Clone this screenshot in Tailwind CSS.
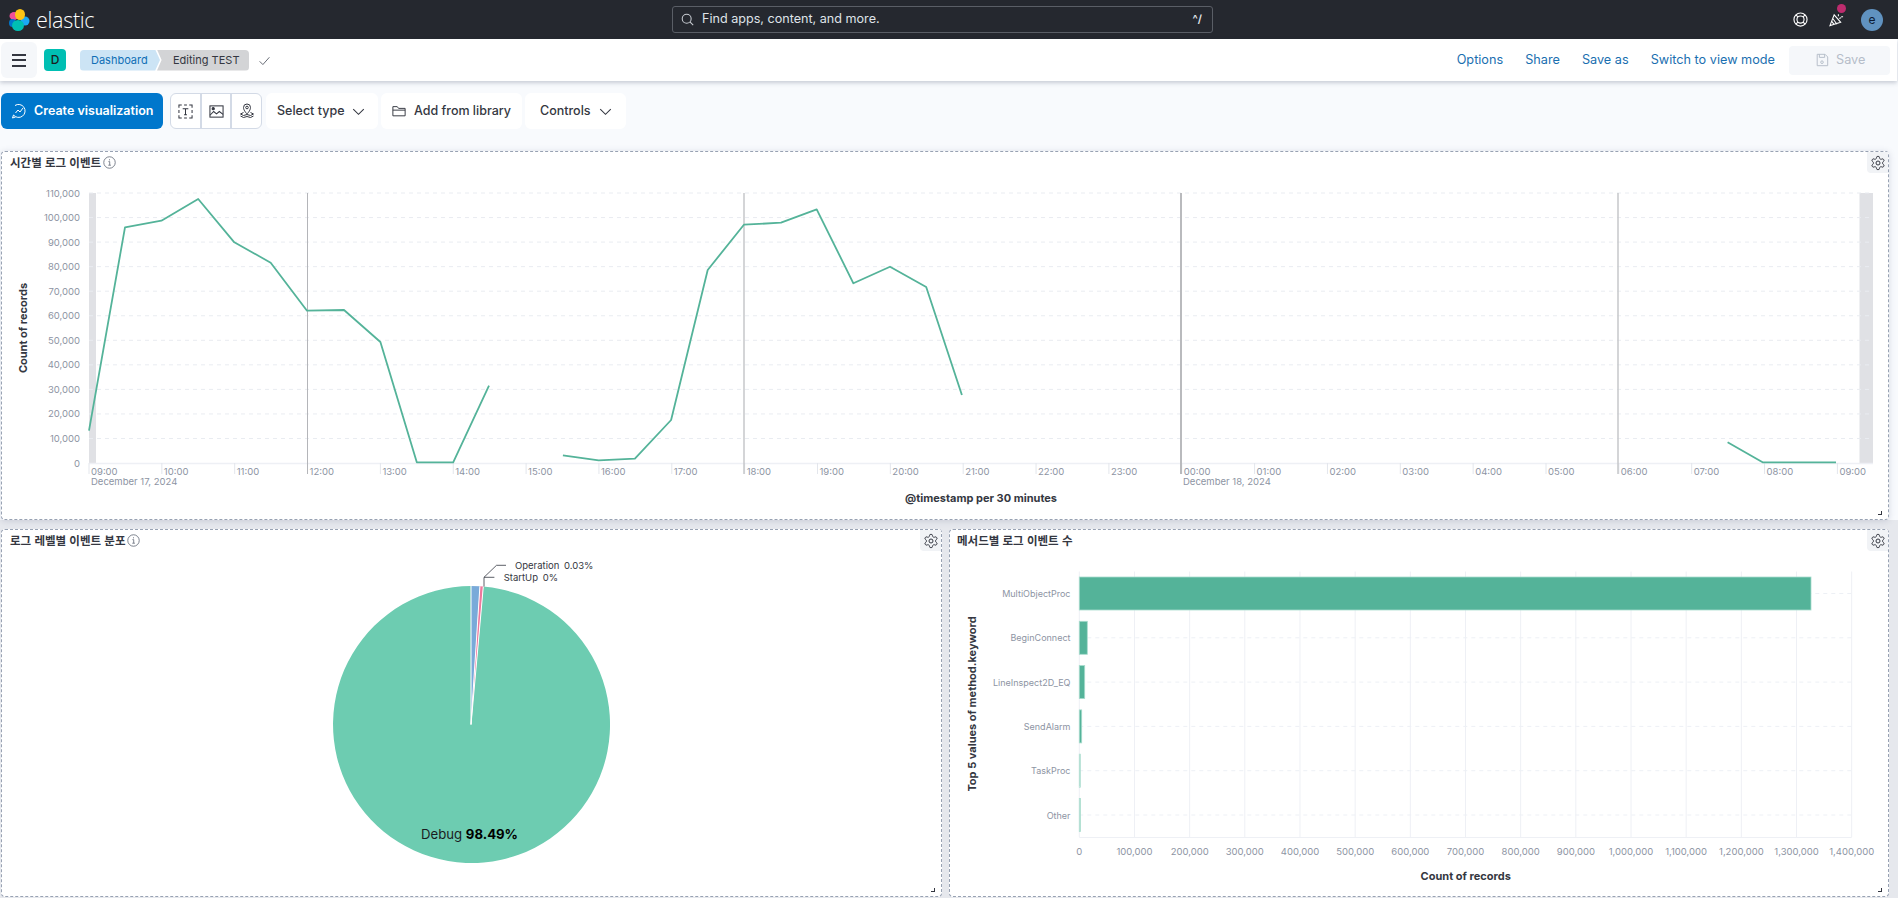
<!DOCTYPE html>
<html lang="ko">

<head>
    <meta charset="UTF-8">
    <title>Editing TEST - Elastic</title>
    <script src="https://cdn.jsdelivr.net/npm/@tailwindcss/browser@4"></script>
</head>

<body class="h-screen overflow-hidden bg-[#f8fafd] text-[#343741] [font-family:Inter,'Noto_Sans_CJK_KR',sans-serif]">
    <svg class="hidden">
        <symbol id="gear" viewBox="0 0 24 24">
            <path fill="none" stroke="currentColor" stroke-width="1.5" d="M12.22 2h-.44a2 2 0 0 0-2 2v.18a2 2 0 0 1-1 1.73l-.43.25a2 2 0 0 1-2 0l-.15-.08a2 2 0 0 0-2.73.73l-.22.38a2 2 0 0 0 .73 2.73l.15.1a2 2 0 0 1 1 1.72v.51a2 2 0 0 1-1 1.74l-.15.09a2 2 0 0 0-.73 2.73l.22.38a2 2 0 0 0 2.73.73l.15-.08a2 2 0 0 1 2 0l.43.25a2 2 0 0 1 1 1.73V20a2 2 0 0 0 2 2h.44a2 2 0 0 0 2-2v-.18a2 2 0 0 1 1-1.73l.43-.25a2 2 0 0 1 2 0l.15.08a2 2 0 0 0 2.73-.73l.22-.39a2 2 0 0 0-.73-2.73l-.15-.08a2 2 0 0 1-1-1.74v-.5a2 2 0 0 1 1-1.74l.15-.09a2 2 0 0 0 .73-2.73l-.22-.38a2 2 0 0 0-2.73-.73l-.15.08a2 2 0 0 1-2 0l-.43-.25a2 2 0 0 1-1-1.73V4a2 2 0 0 0-2-2z" />
            <circle cx="12" cy="12" r="3" fill="none" stroke="currentColor" stroke-width="1.5" />
        </symbol>
        <symbol id="info" viewBox="0 0 12 12">
            <circle cx="6" cy="6" r="5.3" fill="none" stroke="currentColor" stroke-width="0.8" />
            <path d="M5 5.2h1.2v3.2M4.9 8.5h2.4M6 3v1" fill="none" stroke="currentColor" stroke-width="0.8" />
        </symbol>
        <symbol id="chevron" viewBox="0 0 16 16">
            <path d="M1.5 5 8 11.5 14.5 5" fill="none" stroke="currentColor" stroke-width="1.3" />
        </symbol>
    </svg>

    <!-- top bar -->
    <header class="flex h-[39px] items-center bg-[#25282f] text-white">
        <div class="flex w-[672px] items-center pl-[8px]">
            <svg class="h-[22px] w-[22px]" viewBox="0 0 22 22">
                <ellipse cx="6" cy="7" rx="4.5" ry="4" fill="#f04e98" />
                <ellipse cx="17" cy="12" rx="4.5" ry="4.5" fill="#1ba9f5" />
                <ellipse cx="4.5" cy="14" rx="3.5" ry="4" fill="#0077cc" />
                <ellipse cx="12" cy="5.5" rx="5" ry="5.5" fill="#fec514" />
                <ellipse cx="10" cy="16.5" rx="6" ry="5.5" fill="#00bfb3" />
            </svg>
            <span class="ml-[6px] text-[21.5px] leading-none font-light tracking-[-0.3px] [font-family:'Open_Sans',sans-serif]">elastic</span>
        </div>
        <div class="flex h-[27px] w-[541px] items-center rounded-[3px] border border-[#5a5e66] bg-[#25282f] pl-[8px] pr-[10px] text-[12.6px]">
            <svg class="h-[13px] w-[13px] text-[#c8ccd2]" viewBox="0 0 16 16" fill="none" stroke="currentColor" stroke-width="1.3">
                <circle cx="7" cy="7" r="5.5" />
                <path d="m11 11 4 4" />
            </svg>
            <span class="ml-[8px] text-[#dfe3e8]">Find apps, content, and more.</span>
            <span class="ml-auto text-[11px] font-semibold text-[#e4e7eb]">^/</span>
        </div>
        <div class="ml-auto flex items-center">
            <svg class="mr-[21px] h-[15px] w-[15px]" viewBox="0 0 16 16" fill="none" stroke="white" stroke-width="1.2">
                <circle cx="8" cy="8" r="7" />
                <circle cx="8" cy="8" r="3.8" />
                <path d="m3 3 2.3 2.3M13 3l-2.3 2.3M3 13l2.3-2.3M13 13l-2.3-2.3" />
            </svg>
            <div class="relative mr-[16px] h-[15px] w-[16px]">
                <svg class="h-[15px] w-[15px]" viewBox="0 0 16 16" fill="none" stroke="white" stroke-width="1.1">
                    <path d="M1 14.5 5.5 3l7 8-11.5 3.5ZM4 7l4.5 6M3 10l2.5 3.5" />
                    <path d="M10 2.5v2M13 5h2M11 7l2-1" />
                </svg>
                <span class="absolute left-[8px] top-[-8px] h-[9px] w-[9px] rounded-full bg-[#bd2c6e]"></span>
            </div>
            <div class="mr-[15px] flex h-[22px] w-[22px] items-center justify-center rounded-full bg-[#6092c0] text-[12px] text-[#0b1a33]">e</div>
        </div>
    </header>

    <!-- app menu -->
    <nav class="relative z-10 flex h-[42px] w-[1897px] items-center bg-white shadow-[0_2px_4px_rgba(60,70,100,0.25)]">
        <div class="ml-[1px] flex h-[36px] w-[36px] flex-col items-center justify-center gap-[3.5px] rounded-[6px] bg-[#f5f7fa]">
            <span class="h-[2px] w-[14px] bg-[#343741]"></span>
            <span class="h-[2px] w-[14px] bg-[#343741]"></span>
            <span class="h-[2px] w-[14px] bg-[#343741]"></span>
        </div>
        <div class="ml-[7px] flex h-[22px] w-[22px] items-center justify-center rounded-[4px] bg-[#00bfb3] text-[12px] font-medium text-[#1a1c21]">D</div>
        <div class="ml-[14px] flex h-[21px] items-center text-[11px]">
            <span class="flex h-full w-[80px] items-center rounded-l-[4px] bg-[#cce4f5] pl-[11px] text-[#0f6fb5] [clip-path:polygon(0_0,94%_0,100%_50%,94%_100%,0_100%)]">Dashboard</span>
            <span class="ml-[-3px] flex h-full w-[92px] items-center rounded-r-[4px] bg-[#d3d4d6] pl-[16px] [clip-path:polygon(0_0,100%_0,100%_100%,0_100%,5%_50%)]">Editing TEST</span>
        </div>
        <svg class="ml-[9px] h-[13px] w-[13px] text-[#555a65]" viewBox="0 0 16 16" fill="none" stroke="currentColor" stroke-width="1.1">
            <path d="m2 9 4 4 8-9" />
        </svg>
        <div class="ml-auto flex items-center text-[12.7px] text-[#1a6fb0]">
            <span>Options</span>
            <span class="ml-[22px]">Share</span>
            <span class="ml-[22px]">Save as</span>
            <span class="ml-[22px]">Switch to view mode</span>
            <div class="ml-[14px] mr-[7px] flex h-[29px] w-[101px] items-center rounded-[4px] bg-[#f5f7fa] pl-[26px] text-[#b5bdc9]">
                <svg class="h-[14px] w-[14px]" viewBox="0 0 16 16" fill="none" stroke="currentColor" stroke-width="1.1">
                    <path d="M2.5 1.5h9l3 3v10h-12zM5 1.5V5h6V1.5" />
                    <circle cx="8" cy="10.5" r="1.5" />
                </svg>
                <span class="ml-[7px]">Save</span>
            </div>
        </div>
    </nav>

    <!-- toolbar -->
    <div class="flex h-[70px] items-start whitespace-nowrap pl-[1px] pt-[12px] text-[12.5px] font-medium">
        <button class="flex h-[36px] w-[162px] items-center rounded-[6px] bg-[#0077cc] pl-[10px] font-semibold text-white">
            <svg class="h-[16px] w-[16px]" viewBox="0 0 16 16" fill="none" stroke="white" stroke-width="1">
                <path d="M4 2.5A6.5 6.5 0 1 1 2.5 12L1.5 15l3-1" />
                <path d="m4.5 10 2.5-3 2 2 3-4" />
            </svg>
            <span class="ml-[7px]">Create visualization</span>
        </button>
        <div class="ml-[7px] flex h-[36px] w-[92px] overflow-hidden rounded-[6px] border border-[#d3dae6] bg-white text-[#343741]">
            <div class="flex w-[31px] items-center justify-center border-r-2 border-[#d3dae6]">
                <svg class="h-[15px] w-[15px]" viewBox="0 0 16 16" fill="none" stroke="currentColor" stroke-width="1.1">
                    <path d="M1 4V1h3M12 1h3v3M15 12v3h-3M4 15H1v-3M6.5 1h3M6.5 15h3M1 6.5v3M15 6.5v3" />
                    <path d="M5 5h6M8 5v6.5M6.5 11.5h3" />
                </svg>
            </div>
            <div class="flex w-[30px] items-center justify-center border-r-2 border-[#d3dae6]">
                <svg class="h-[15px] w-[15px]" viewBox="0 0 16 16" fill="none" stroke="currentColor" stroke-width="1.1">
                    <rect x="1" y="2" width="14" height="12" />
                    <circle cx="4.5" cy="5" r="1.2" fill="currentColor" />
                    <path d="m1 12 4-4 3 2.5 3-2.5 4 3" />
                </svg>
            </div>
            <div class="flex flex-1 items-center justify-center">
                <svg class="h-[16px] w-[16px]" viewBox="0 0 16 16" fill="none" stroke="currentColor" stroke-width="1">
                    <path d="M8 11S4.5 7.5 4.5 4.5a3.5 3.5 0 0 1 7 0C11.5 7.5 8 11 8 11Z" />
                    <circle cx="8" cy="4.5" r="1.3" />
                    <path d="M4.5 9.5 1.5 11l3 1.5 3.500-1 3.500 1 3-1.500-3-1.500M1.500 13l3 1.500 3.500-1 3.500 1 3-1.500" />
                </svg>
            </div>
        </div>
        <button class="ml-[4px] flex h-[36px] w-[112px] items-center rounded-[6px] bg-white pl-[11px]">
            <span>Select type</span>
            <svg class="ml-[8px] h-[13px] w-[13px]"><use href="#chevron" /></svg>
        </button>
        <button class="ml-[3px] flex h-[36px] w-[141px] items-center rounded-[6px] bg-white pl-[11px]">
            <svg class="h-[14px] w-[14px]" viewBox="0 0 16 16" fill="none" stroke="currentColor" stroke-width="1.1">
                <path d="M1 13.5V3h5l1.5 2H15v8.5zM1 7h14" />
            </svg>
            <span class="ml-[8px]">Add from library</span>
        </button>
        <button class="ml-[3px] flex h-[36px] w-[101px] items-center rounded-[6px] bg-white pl-[15px]">
            <span>Controls</span>
            <svg class="ml-[8px] h-[13px] w-[13px]"><use href="#chevron" /></svg>
        </button>
    </div>

    <!-- panels -->
    <main class="w-[1898px] pl-[1px]">
        <section class="relative h-[369px] w-[1888px] rounded-[4px] border border-dashed border-[#98a2b3] bg-white shadow-[0_1px_6px_rgba(90,100,130,0.22)]">
            <h3 class="flex h-[21px] items-center pl-[8px] text-[11.5px] font-semibold [font-family:'Noto_Sans_CJK_KR',sans-serif]">시간별 로그 이벤트<svg class="ml-[2px] h-[13px] w-[13px] text-[#69707d]"><use href="#info" /></svg></h3>
            <svg id="timeChart" width="1886" height="346" viewBox="2 173 1886 346" class="block"></svg>
            <div class="absolute right-0 top-0 flex h-[21px] w-[21px] items-center justify-center rounded-bl-[4px] bg-[#f1f3f6] text-[#343741]"><svg class="h-[16px] w-[16px]"><use href="#gear" /></svg></div>
            <span class="absolute bottom-[4px] right-[6px] h-[4px] w-[4px] border-b border-r border-[#343741]"></span>
        </section>
        <div class="ml-[-1px] flex h-[378px] bg-[#e6e8ed] pl-[1px] pt-[9px]">
            <section class="relative h-[368px] w-[941px] rounded-[4px] border border-dashed border-[#98a2b3] bg-white">
                <h3 class="flex h-[21px] items-center pl-[8px] text-[11.5px] font-semibold [font-family:'Noto_Sans_CJK_KR',sans-serif]">로그 레벨별 이벤트 분포<svg class="ml-[2px] h-[13px] w-[13px] text-[#69707d]"><use href="#info" /></svg></h3>
                <svg width="939" height="345" viewBox="2 551 939 345" class="block">
                    <path d="M471 724.5 483.3 586.5A138.5 138.5 0 1 1 471 586Z" fill="#6dccb1" />
                    <path d="M471 724.5 471 586A138.5 138.5 0 0 1 479.9 586.3Z" fill="#79aad9" />
                    <path d="M471 724.5 479.9 586.3A138.5 138.5 0 0 1 483.3 586.5Z" fill="#ee789d" />
                    <path d="M471 724.5 471 586M471 724.5 479.9 586.3M471 724.5 483.3 586.5" stroke="white" stroke-width="1" fill="none" />
                    <path d="M484 586.5V577.3L496.5 565.3H506M484 577.3H494.4" stroke="#343741" stroke-width="0.8" fill="none" />
                    <text x="515" y="568.5" class="fill-[#343741] text-[9.5px] [word-spacing:2px]">Operation 0.03%</text>
                    <text x="503.7" y="580.5" class="fill-[#343741] text-[9.5px] [word-spacing:2px]">StartUp 0%</text>
                    <text x="469.5" y="839" text-anchor="middle" class="fill-[#1a1c21] text-[13.2px]">Debug <tspan class="font-bold fill-black">98.49%</tspan></text>
                </svg>
                <div class="absolute right-0 top-0 flex h-[21px] w-[21px] items-center justify-center rounded-bl-[4px] bg-[#f1f3f6]"><svg class="h-[16px] w-[16px]"><use href="#gear" /></svg></div>
                <span class="absolute bottom-[4px] right-[6px] h-[4px] w-[4px] border-b border-r border-[#343741]"></span>
            </section>
            <section class="relative ml-[7px] h-[368px] w-[940px] rounded-[4px] border border-dashed border-[#98a2b3] bg-white">
                <h3 class="flex h-[21px] items-center pl-[7px] text-[11.5px] font-semibold [font-family:'Noto_Sans_CJK_KR',sans-serif]">메서드별 로그 이벤트 수</h3>
                <svg id="barChart" width="938" height="345" viewBox="950 551 938 345" class="block"></svg>
                <div class="absolute right-0 top-0 flex h-[21px] w-[21px] items-center justify-center rounded-bl-[4px] bg-[#f1f3f6]"><svg class="h-[16px] w-[16px]"><use href="#gear" /></svg></div>
                <span class="absolute bottom-[4px] right-[6px] h-[4px] w-[4px] border-b border-r border-[#343741]"></span>
            </section>
        </div>
    </main>

    <script>
        const tickText = 'fill-[#8d94a3] text-[9.5px]';
        const barText = 'fill-[#8d94a3] text-[9px]';
        const axisTitle = 'fill-[#343741] text-[11px] font-bold';

        function line(x1, y1, x2, y2, color, width = 1, dash = '') {
            return `<line x1="${x1}" y1="${y1}" x2="${x2}" y2="${y2}" stroke="${color}" stroke-width="${width}" stroke-dasharray="${dash}" />`;
        }

        function polyline(points) {
            return `<polyline points="${points}" fill="none" stroke="#54b399" stroke-width="1.8" stroke-linejoin="round" />`;
        }

        // time chart: 24 hours, one tick per hour
        function drawTimeChart() {
            const hourX = h => 89 + 72.85 * h;
            let out = '';
            out += '<rect x="89" y="193" width="7" height="270" fill="#e0e1e5" />';
            out += '<rect x="1859.5" y="193" width="13.5" height="270" fill="#e0e1e5" />';
            for (let i = 0; i <= 11; i++) {
                const y = 193 + i * 24.55;
                const label = ((11 - i) * 10000).toLocaleString('en-US');
                if (i < 11) out += line(89, y, 1873, y, '#e9ecf1', 1, '4 4');
                out += `<text x="80" y="${y + 3.5}" text-anchor="end" class="${tickText}">${label}</text>`;
            }
            out += line(89, 463.5, 1873, 463.5, '#eef0f5', 1.5);
            for (let h = 0; h <= 24; h++) {
                const x = hourX(h);
                const label = String((h + 9) % 24).padStart(2, '0') + ':00';
                out += line(x, 463, x, 474, '#e3e6ec');
                out += `<text x="${x + 2}" y="474.5" class="${tickText}">${label}</text>`;
            }
            out += line(307.5, 193, 307.5, 474, '#b4b5b9', 1);
            out += line(744, 193, 744, 474, '#c6c7ca', 1.5);
            out += line(1181, 193, 1181, 474, '#b9babd', 2);
            out += line(1618, 193, 1618, 474, '#c6c7ca', 1.5);
            out += `<text x="91" y="485" class="${tickText}">December 17, 2024</text>`;
            out += `<text x="1183" y="485" class="${tickText}">December 18, 2024</text>`;
            out += polyline('89,430.7 125,227.3 161.4,220.7 198.2,199 234.3,242.3 270.7,262.7 307,310.7 344,310 380.4,342 416.8,462.3 453.2,462.3 489,385.7');
            out += polyline('562.9,455.3 598.7,460.3 634.9,458.7 671.1,420 707.7,270 743.9,224.7 781,222.7 816.7,209.3 853.4,283.3 890,266.7 926.2,287 961.9,395');
            out += polyline('1727.6,442.3 1762.6,462.3 1836,462.3');
            out += `<text x="981" y="502" text-anchor="middle" class="${axisTitle}">@timestamp per 30 minutes</text>`;
            out += `<text transform="translate(26.5 328) rotate(-90)" text-anchor="middle" class="${axisTitle}">Count of records</text>`;
            document.getElementById('timeChart').innerHTML = out;
        }

        // bar chart: top 5 methods plus other
        function drawBarChart() {
            const bars = [
                ['MultiObjectProc', 731.7, '#54b399'],
                ['BeginConnect', 8, '#54b399'],
                ['LineInspect2D_EQ', 5.4, '#54b399'],
                ['SendAlarm', 2.4, '#54b399'],
                ['TaskProc', 1, '#c9e8df'],
                ['Other', 1.2, '#c9e8df'],
            ];
            const left = 1079.3;
            let out = '';
            for (let i = 0; i <= 14; i++) {
                const x = left + i * 55.17;
                out += line(x, 571.5, x, 837, '#eef0f5');
                const label = i === 0 ? '0' : (i * 100000).toLocaleString('en-US');
                out += `<text x="${x}" y="854.5" text-anchor="middle" class="${tickText}">${label}</text>`;
            }
            out += line(left, 837.5, 1851.7, 837.5, '#eef0f5');
            bars.forEach(([name, width, color], i) => {
                const mid = 593.5 + i * 44.3;
                out += line(left, mid, 1851.7, mid, '#edf0f5', 1, '4 4');
                out += `<rect x="${left}" y="${mid - 16.5}" width="${width}" height="33" fill="${color}" stroke="#a8dccd" stroke-width="0.8" />`;
                out += `<text x="1070.5" y="${mid + 3.5}" text-anchor="end" class="${barText}">${name}</text>`;
            });
            out += `<text x="1465.7" y="880" text-anchor="middle" class="${axisTitle}">Count of records</text>`;
            out += `<text transform="translate(975.5 704) rotate(-90)" text-anchor="middle" class="${axisTitle}">Top 5 values of method.keyword</text>`;
            document.getElementById('barChart').innerHTML = out;
        }

        drawTimeChart();
        drawBarChart();
    </script>
</body>

</html>
